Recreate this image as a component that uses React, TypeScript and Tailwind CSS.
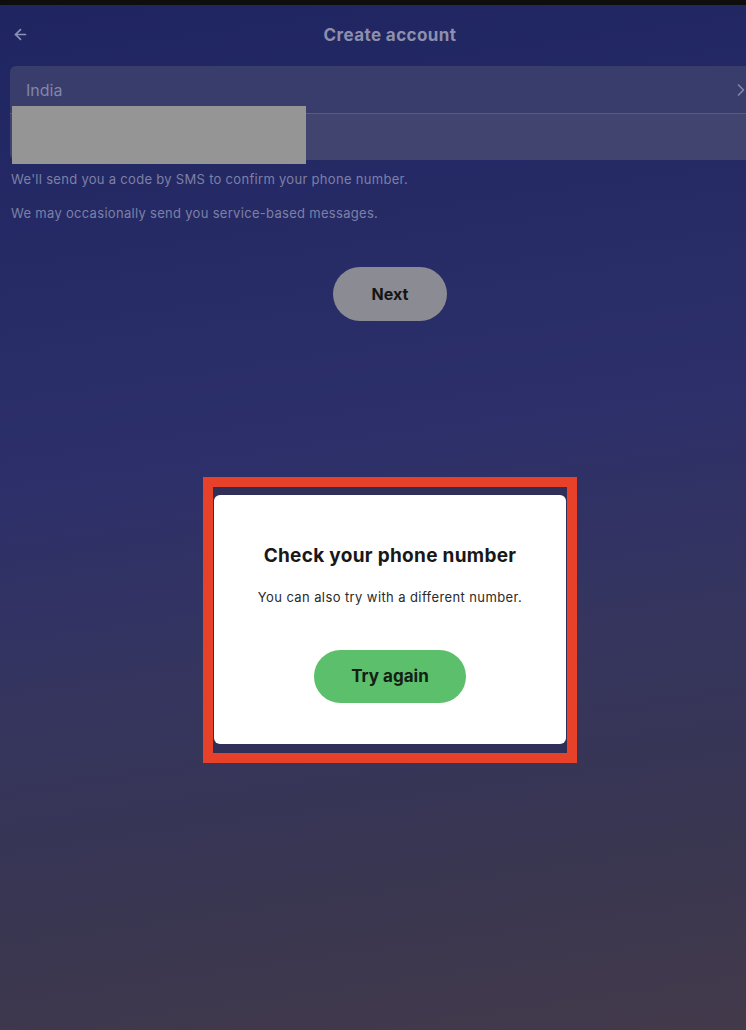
import { ArrowLeft, ChevronRight } from "lucide-react";

function Field() {
  return (
    <div className="relative mx-[10px] mt-[3px] overflow-hidden rounded-[6px]">
      <div className="flex h-[47px] items-center justify-between bg-[#393d6b] pl-[16px] pr-[19px]">
        <span className="text-[16px] text-[#8286a8]">India</span>
        <ChevronRight className="h-[20px] w-[20px] text-[#8286a9]" strokeWidth={2} />
      </div>
      <div className="h-px bg-[#575b87]" />
      <div className="h-[46px] bg-[#424470]" />
    </div>
  );
}

export default function App() {
  return (
    <div className="relative h-[1030px] w-[746px] overflow-hidden bg-[linear-gradient(172deg,#1f2561_0%,#262b66_25%,#2c2f6a_42%,#35355f_62%,#393651_82%,#433a4b_100%)] font-['Inter',sans-serif]">
      <div className="h-[5px] bg-[#0e0e0f]" />

      <div className="w-[780px]">
        <header className="relative flex h-[58px] items-center justify-center pt-[4px]">
          <ArrowLeft className="absolute left-[12px] top-[21px] h-[17px] w-[17px] text-[#8e92b8]" strokeWidth={2.4} />
          <h1 className="text-[17px] font-bold tracking-[0.4px] text-[#8d90ad]">Create account</h1>
        </header>

        <Field />

        <div className="mt-[10px] space-y-[16px] px-[11px] text-[13px] leading-[18px] tracking-[0.3px] text-[#7d80a6]">
          <p>We'll send you a code by SMS to confirm your phone number.</p>
          <p>We may occasionally send you service-based messages.</p>
        </div>

        <div className="mt-[45px] flex justify-center">
          <button className="h-[54px] w-[114px] rounded-full bg-[#8b8b93] text-[16px] font-bold text-[#141414]">
            Next
          </button>
        </div>

        <div className="mt-[156px] flex justify-center">
          <div className="w-[374px] border-[10px] border-[#e8412a] bg-[#302f57] px-px pb-[9px] pt-[8px]">
            <div className="flex flex-col items-center rounded-[6px] bg-white pb-[41px] pt-[49px]">
              <h2 className="text-[19px] font-bold leading-[24px] tracking-[0.3px] text-[#181818]">
                Check your phone number
              </h2>
              <p className="mt-[21px] text-[13px] leading-[16px] tracking-[0.4px] text-[#2a2a2a]">
                You can also try with a different number.
              </p>
              <button className="mt-[45px] h-[53px] w-[152px] rounded-full bg-[#5cbf6c] text-[17px] font-bold text-[#132014]">
                Try again
              </button>
            </div>
          </div>
        </div>
      </div>

      {/* redacted number */}
      <div className="absolute left-[12px] top-[106px] h-[58px] w-[294px] bg-[#959595]" />
    </div>
  );
}
